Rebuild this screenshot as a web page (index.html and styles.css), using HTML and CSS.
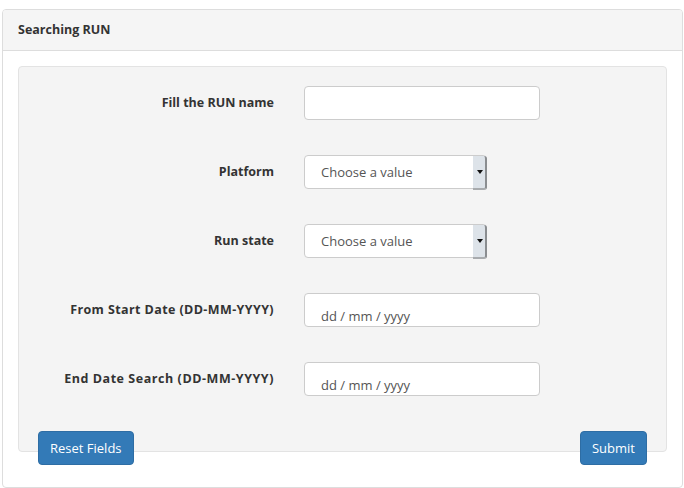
FILE: index.html
```html
<!DOCTYPE html>
<html>
<head>
<meta charset="utf-8">
<link rel="stylesheet" href="styles.css">
</head>
<body>
<div class="panel">
  <div class="panel-heading">Searching RUN</div>
  <div class="panel-body">
    <form class="well">
      <div class="row">
        <label class="lbl">Fill the RUN name</label>
        <input class="ctrl text" type="text">
      </div>
      <div class="row">
        <label class="lbl">Platform</label>
        <div class="select-wrap"><select class="ctrl sel"><option>Choose a value</option></select></div>
      </div>
      <div class="row">
        <label class="lbl">Run state</label>
        <div class="select-wrap"><select class="ctrl sel"><option>Choose a value</option></select></div>
      </div>
      <div class="row">
        <label class="lbl wide">From Start Date (DD-MM-YYYY)</label>
        <input class="ctrl text date" type="text" placeholder="dd / mm / yyyy">
      </div>
      <div class="row">
        <label class="lbl wider">End Date Search (DD-MM-YYYY)</label>
        <input class="ctrl text date" type="text" placeholder="dd / mm / yyyy">
      </div>
      <div class="actions">
        <button type="button" class="btn">Reset Fields</button>
        <button type="button" class="btn">Submit</button>
      </div>
    </form>
  </div>
</div>
</body>
</html>
```
FILE: styles.css
```css
* { box-sizing: border-box; }
html, body { background: #fff; }
body {
  margin: 9px 1px 0 2px;
  font-family: "Open Sans", "Noto Sans", sans-serif;
  font-size: 13px;
  color: #333;
}
.panel {
  border: 1px solid #ddd;
  border-radius: 4px;
  background: #fff;
}
.panel-heading {
  height: 41px;
  background: #f5f5f5;
  border-bottom: 1px solid #ddd;
  border-radius: 3px 3px 0 0;
  padding: 0 15px 2px;
  display: flex;
  align-items: center;
  font-weight: bold;
  font-size: 12.5px;
  color: #333;
}
.panel-body {
  padding: 15px 15px 35px 15px;
}
.well {
  margin: 0;
  background: #f4f4f4;
  border: 1px solid #e3e3e3;
  border-radius: 4px;
  padding: 19px 19px 0 20px;
  display: flex;
  flex-direction: column;
  gap: 35px;
}
.row {
  display: flex;
  align-items: center;
  gap: 30px;
  height: 34px;
}
.lbl {
  width: 235px;
  text-align: right;
  font-weight: bold;
  font-size: 12.5px;
  color: #333;
  padding-bottom: 2px;
}
.lbl.wide { letter-spacing: 0.4px; }
.lbl.wider { letter-spacing: 0.55px; }
.ctrl {
  height: 34px;
  border: 1px solid #ccc;
  border-radius: 4px;
  background: #fff;
  font-family: "Open Sans", "Noto Sans", sans-serif;
  font-size: 13px;
  color: #555;
  outline: none;
}
.text {
  width: 236px;
  padding: 0 16px;
}
.date {
  padding-top: 11px;
}
.date::placeholder { color: #555; opacity: 1; }
.select-wrap {
  position: relative;
  width: 183px;
  height: 34px;
}
.sel {
  width: 183px;
  padding: 0 16px;
  appearance: none;
  -webkit-appearance: none;
}
.select-wrap::after {
  content: "";
  position: absolute;
  right: 0;
  top: 1px;
  width: 12px;
  height: 32px;
  background: #dde3e9;
  border-right: 2px solid #8a8d90;
  border-bottom: 2px solid #a8abae;
  border-radius: 0 3px 3px 0;
}
.select-wrap::before {
  content: "";
  position: absolute;
  right: 4px;
  top: 15px;
  width: 0;
  height: 0;
  border-left: 3px solid transparent;
  border-right: 3px solid transparent;
  border-top: 4px solid #111;
  z-index: 1;
}
.actions {
  display: flex;
  justify-content: space-between;
  margin-bottom: -14px;
}
.btn {
  height: 34px;
  padding: 0 11px;
  background: #337ab7;
  border: 1px solid #2e6da4;
  border-radius: 4px;
  color: #fff;
  font-family: "Open Sans", "Noto Sans", sans-serif;
  font-size: 13px;
}
.actions .btn:first-child { margin-left: -1px; }
```
